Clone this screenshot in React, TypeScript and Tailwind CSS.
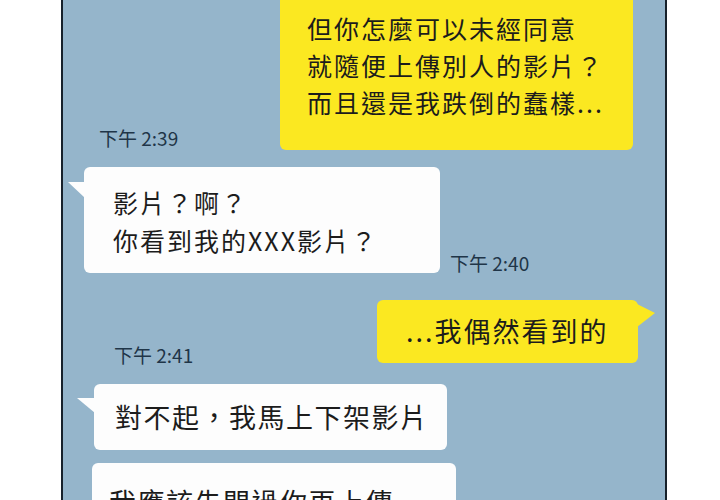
const font = { fontFamily: '"Noto Sans CJK TC", "Noto Sans", sans-serif' }

function Stamp({ time, className }: { time: string; className?: string }) {
  return (
    <span className={`text-[19px] leading-[22px] text-[#1f3548] whitespace-nowrap ${className ?? ''}`}>
      下午 {time}
    </span>
  )
}

export default function App() {
  return (
    <div className="w-[720px] h-[500px] bg-white overflow-hidden" style={font}>
      <div className="ml-[61px] w-[606px] h-[500px] border-x-2 border-[#17212b] bg-[#95b5cb] flex flex-col overflow-hidden text-[#1c1c1c]">
        {/* row: 2:39 + yellow question */}
        <div className="-mt-[9px] shrink-0 flex items-end justify-between">
          <Stamp time="2:39" className="ml-[36px] mb-[1px]" />
          <div className="mr-[32px] w-[353px] h-[159px] rounded-md bg-[#fbe821] pl-[27px] pt-[19px] text-[25px] leading-[37px] tracking-[2px]">
            <p>但你怎麼可以未經同意</p>
            <p>就隨便上傳別人的影片？</p>
            <p>而且還是我跌倒的蠢樣...</p>
          </div>
        </div>

        {/* row: white reply + 2:40 */}
        <div className="mt-[17px] shrink-0 flex items-end">
          <div className="relative ml-[21px] w-[356px] h-[106px] rounded-md bg-[#fdfdfd] pl-[29px] pt-[16px] text-[25px] leading-[38px] tracking-[2px]">
            <svg className="absolute -left-[16px] top-[15px]" width="17" height="16" viewBox="0 0 17 16">
              <polygon points="0,0 17,0 17,16" fill="#fdfdfd" />
            </svg>
            <p>影片？啊？</p>
            <p>你看到我的XXX影片？</p>
          </div>
          <Stamp time="2:40" className="ml-[10px] -mb-[1px]" />
        </div>

        {/* row: 2:41 + yellow */}
        <div className="mt-[27px] shrink-0 flex items-end justify-between">
          <Stamp time="2:41" className="ml-[51px] -mb-[3px]" />
          <div className="relative mr-[27px] w-[261px] h-[63px] rounded-md bg-[#fbe821] pl-[29px] flex items-center text-[27px] tracking-[2px]">
            <svg className="absolute -right-[17px] top-[4px]" width="18" height="24" viewBox="0 0 18 24">
              <polygon points="0,0 18,9 0,23" fill="#fbe821" />
            </svg>
            ...我偶然看到的
          </div>
        </div>

        <div className="relative mt-[21px] ml-[31px] shrink-0 w-[353px] h-[66px] rounded-md bg-[#fdfdfd] pl-[21px] flex items-center text-[27px] tracking-[1.5px]">
          <svg className="absolute -left-[17px] top-[14px]" width="18" height="16" viewBox="0 0 18 16">
            <polygon points="0,0 18,0 18,15" fill="#fdfdfd" />
          </svg>
          對不起，我馬上下架影片
        </div>

        <div className="mt-[13px] ml-[29px] w-[364px] h-[80px] shrink-0 rounded-md bg-[#fdfdfd] pl-[17px] pt-[20px] text-[27px] leading-[37px] tracking-[1.5px]">
          我應該先問過你再上傳
        </div>
      </div>
    </div>
  )
}
